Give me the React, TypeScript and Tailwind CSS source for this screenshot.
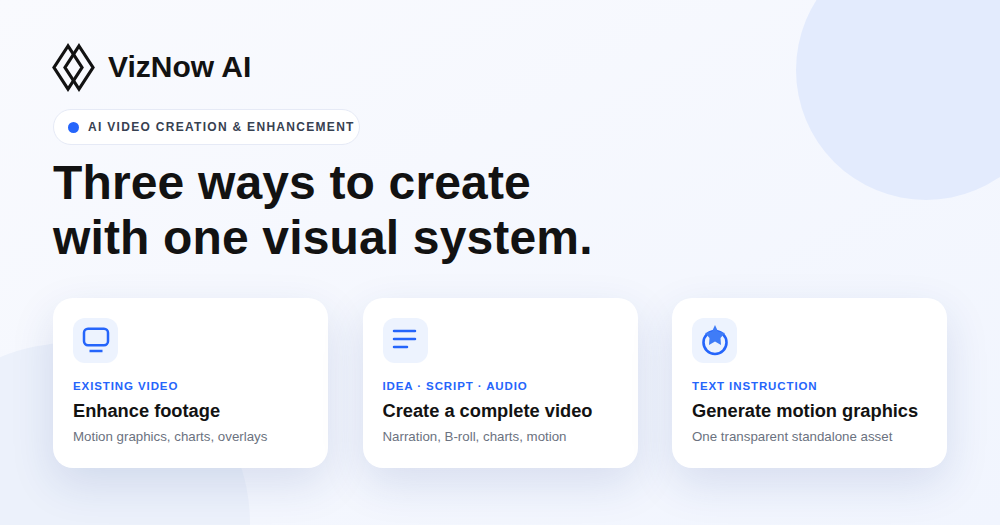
import React from 'react';

const VizLogo = () => (
  <svg width="47" height="56" viewBox="0 0 47 56" fill="none" stroke="#121212" strokeWidth="3.2" strokeLinejoin="miter" className="shrink-0">
    <path d="M18 7 L4 28.5 L18 50 L32 28.5 Z" />
    <path d="M29 7 L43 28.5 L29 50 L15 28.5 Z" />
  </svg>
);

const MonitorIcon = () => (
  <svg width="32" height="32" viewBox="0 0 32 32" fill="none" stroke="#2565fb" strokeWidth="2.5" strokeLinecap="round">
    <rect x="4" y="3.7" width="24" height="16.6" rx="4" />
    <path d="M9.5 26 H22.5" strokeLinecap="butt" />
  </svg>
);

const LinesIcon = () => (
  <svg width="32" height="32" viewBox="0 0 32 32" fill="none" stroke="#2565fb" strokeWidth="2.5" strokeLinecap="round">
    <path d="M5 6 H26" />
    <path d="M5 14 H26" />
    <path d="M5 22 H18" />
  </svg>
);

const StarIcon = () => (
  <svg width="32" height="32" viewBox="0 0 32 32" fill="none">
    <circle cx="16" cy="17.5" r="11.5" stroke="#2565fb" strokeWidth="2.6" />
    <path d="M16 0 L19 6.5 L26 8 L21.5 13 L22 20 L16 16.5 L10 20 L10.5 13 L6 8 L13 6.5 Z" fill="#3f7cf7" />
  </svg>
);

const cards = [
  { icon: <MonitorIcon />, label: 'EXISTING VIDEO', title: 'Enhance footage', desc: 'Motion graphics, charts, overlays' },
  { icon: <LinesIcon />, label: 'IDEA · SCRIPT · AUDIO', title: 'Create a complete video', desc: 'Narration, B-roll, charts, motion' },
  { icon: <StarIcon />, label: 'TEXT INSTRUCTION', title: 'Generate motion graphics', desc: 'One transparent standalone asset' },
];

export default function App() {
  return (
    <div className="relative w-[1000px] h-[525px] overflow-hidden bg-gradient-to-br from-[#f9fafe] to-[#f1f5fe] font-['Liberation_Sans',Arial,sans-serif]">
      <div className="absolute w-[260px] h-[260px] rounded-full bg-[#e3ebfd] top-[-60px] left-[796px]" />
      <div className="absolute w-[360px] h-[360px] rounded-full bg-[#ecf1fb] top-[343px] left-[-110px]" />

      <div className="relative flex flex-col pl-[53px] pt-[39px]">
        <div className="flex items-center gap-[11px] h-[56px] -ml-[3px]">
          <VizLogo />
          <span className="text-[30px] font-bold text-[#121212] leading-none">VizNow AI</span>
        </div>

        <div className="mt-[14px] w-[307px] h-[36px] flex items-center pl-[14px] gap-[9px] bg-white border border-[#e6eaf6] rounded-full">
          <span className="w-[11px] h-[11px] rounded-full bg-[#2565fb] shrink-0" />
          <span className="text-[12px] font-bold tracking-[1.3px] text-[#374151] whitespace-nowrap">AI VIDEO CREATION &amp; ENHANCEMENT</span>
        </div>

        <h1 className="mt-[10px] text-[48px] font-bold leading-[55px] tracking-[0.15px] text-[#121212]">
          Three ways to create
          <br />
          with one visual system.
        </h1>

        <div className="mt-[33px] flex gap-[34.5px]">
          {cards.map((card) => (
            <div key={card.title} className="w-[275px] h-[170px] bg-white rounded-[20px] p-[20px] shadow-[0_16px_44px_rgba(30,60,140,0.13)]">
              <div className="w-[45px] h-[45px] rounded-[12px] bg-[#edf3fe] flex items-center justify-center">
                {card.icon}
              </div>
              <div className="mt-[16px] text-[11.5px] font-bold tracking-[0.9px] leading-[14px] text-[#2565fb]">{card.label}</div>
              <div className="mt-[6px] text-[18.25px] font-bold leading-[24px] text-[#121212]">{card.title}</div>
              <div className="mt-[5px] text-[13.3px] leading-[18px] text-[#6b7280]">{card.desc}</div>
            </div>
          ))}
        </div>
      </div>
    </div>
  );
}
